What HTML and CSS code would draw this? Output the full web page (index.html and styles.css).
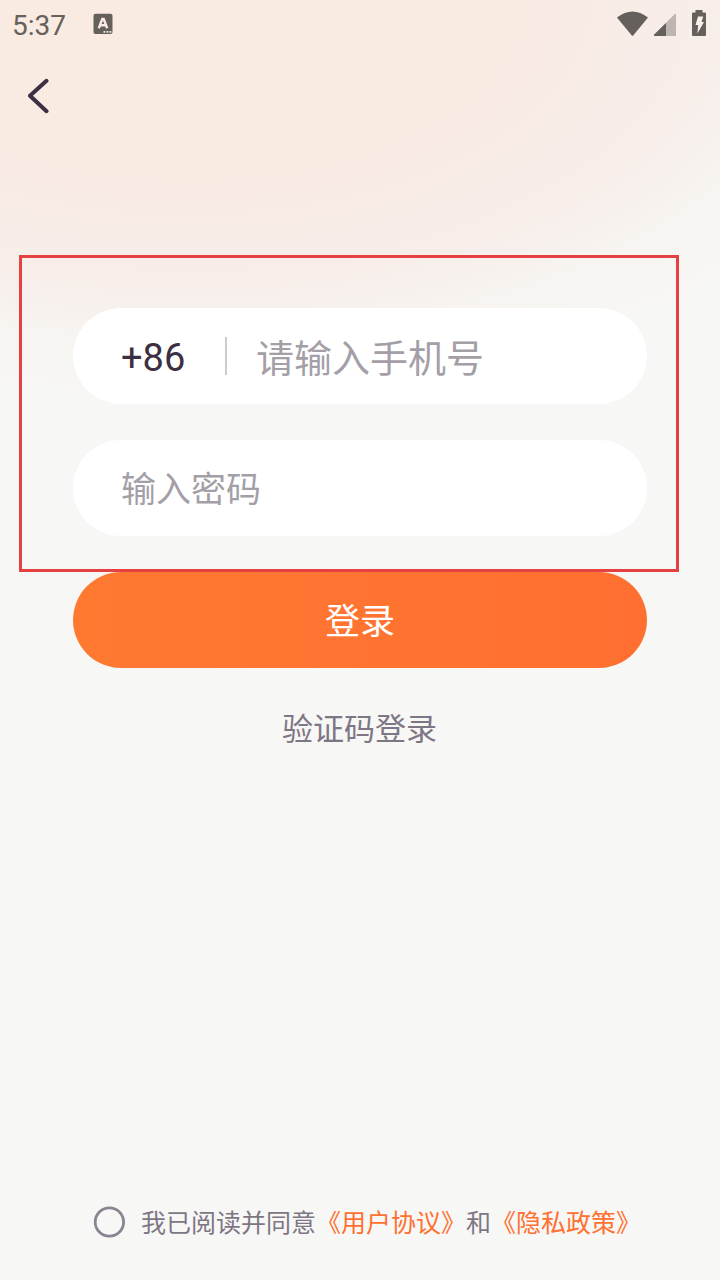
FILE: index.html
```html
<!DOCTYPE html>
<html lang="zh-CN">
<head>
<meta charset="utf-8">
<title>登录</title>
<link rel="stylesheet" href="styles.css">
</head>
<body>
<div class="screen">
  <header class="status">
    <span class="time">5:37</span>
    <svg class="notice" width="20" height="22" viewBox="0 0 20 22">
      <rect x="0.5" y="0.7" width="19" height="20.4" rx="2" fill="#65605a"/>
      <path d="M5.800 15.200 9.300 6H10.700L14.200 15.200M7.200 12.200H12.800" fill="none" stroke="#f9eae3" stroke-width="2.400"/>
      <path d="M10.5 18h1.8v1.8h-1.8zM13.6 18h1.8v1.8h-1.8zM16.5 18h1.8v1.8h-1.8z" fill="#f9eae3"/>
    </svg>
    <svg class="indicators" width="92" height="30" viewBox="0 0 92 30">
      <path d="M0.9 8.5Q16.5-3.6 32 8.5L17.2 26.5Q16.5 27 15.8 26.5L0.9 8.5Z" fill="#65605c"/>
      <path d="M60 5V27H38.5Q37.5 26.4 38 25.8L58.8 5Q59.6 4.4 60 5Z" fill="#beb4b1"/>
      <path d="M50 14V27H38.5Q37.5 26.4 38 25.8Z" fill="#65605c"/>
      <path d="M79.5 1h7v2.5H89q1 0 1 1V26q0 1-1 1H77q-1 0-1-1V4.500q0-1 1-1h2.500z" fill="#65605c"/>
      <path d="M82 7.500h5.200L85.500 13H88L81.400 24.500 82.200 16H79.500z" fill="#f9f0ec"/>
    </svg>
  </header>
  <nav class="nav">
    <svg width="24" height="36" viewBox="0 0 24 36"><path d="M20.500 2.800 4 17.700 20.500 33.200" fill="none" stroke="#3c2f42" stroke-width="4" stroke-linecap="round" stroke-linejoin="round"/></svg>
  </nav>
  <main class="main">
    <section class="frame">
      <div class="field phone"><span class="code">+86</span><span class="divider"></span><span class="hint">请输入手机号</span></div>
      <div class="field password"><span class="hint">输入密码</span></div>
    </section>
    <div class="submit">登录</div>
    <div class="alternate">验证码登录</div>
  </main>
  <footer class="agreement">
    <svg width="32" height="32" viewBox="0 0 32 32"><circle cx="16.400" cy="16" r="14.200" fill="none" stroke="#8b8490" stroke-width="2.800"/></svg>
    <p class="terms">我已阅读并同意<span class="link">《用户协议》</span>和<span class="link">《隐私政策》</span></p>
  </footer>
</div>
</body>
</html>
```

FILE: styles.css
```css
* { box-sizing: border-box; }
body { margin: 0; font-family: Roboto, "Noto Sans CJK SC", sans-serif; }
.screen {
  display: flex;
  flex-direction: column;
  width: 720px;
  height: 1280px;
  overflow: hidden;
  background: radial-gradient(ellipse 760px 410px at 190px 0, #f9eae2 0%, #f9eae2 42%, #f7eeea 70%, #f7f4f1 83%, #f7f7f5 100%) #f7f7f5;
}
.status { display: flex; height: 48px; padding-left: 12px; }
.time { width: 81px; padding-top: 2px; font-size: 28px; line-height: 48px; color: #65605a; }
.notice { margin-top: 13px; }
.indicators { margin: 9px 12px 0 auto; }
.nav { display: flex; align-items: center; height: 96px; padding-left: 26px; }
.main { display: flex; flex-direction: column; align-items: center; padding-top: 111px; }
.frame {
  display: flex;
  flex-direction: column;
  gap: 36px;
  align-self: flex-start;
  width: 660px;
  height: 317px;
  margin-left: 19px;
  padding: 50px 29px 0 51px;
  border: 3px solid #e54142;
}
.field { display: flex; align-items: center; width: 574px; height: 96px; padding-left: 48px; border-radius: 48px; background: #fff; line-height: 56px; color: #a49fa7; }
.phone { font-size: 38px; }
.password { font-size: 35px; }
.hint { padding-top: 5px; }
.code { width: 104px; padding-top: 4px; color: #3c2f42; }
.divider { width: 2px; height: 38px; margin-right: 29px; background: #ccc; }
.submit { width: 574px; height: 96px; padding-top: 3px; border-radius: 48px; background: linear-gradient(90deg, #ff7931, #ff6f31); color: #fff; font-size: 35px; line-height: 96px; text-align: center; }
.alternate { margin-top: 38px; padding-right: 1px; color: #7e7684; font-size: 31px; line-height: 48px; text-align: center; }
.agreement { display: flex; align-items: center; gap: 16px; height: 40px; margin: auto 0 38px; padding-left: 93px; }
.terms { margin: 0; padding-top: 4px; font-size: 25px; line-height: 40px; color: #7e7684; white-space: nowrap; }
.link { color: #ff7131; }
```
